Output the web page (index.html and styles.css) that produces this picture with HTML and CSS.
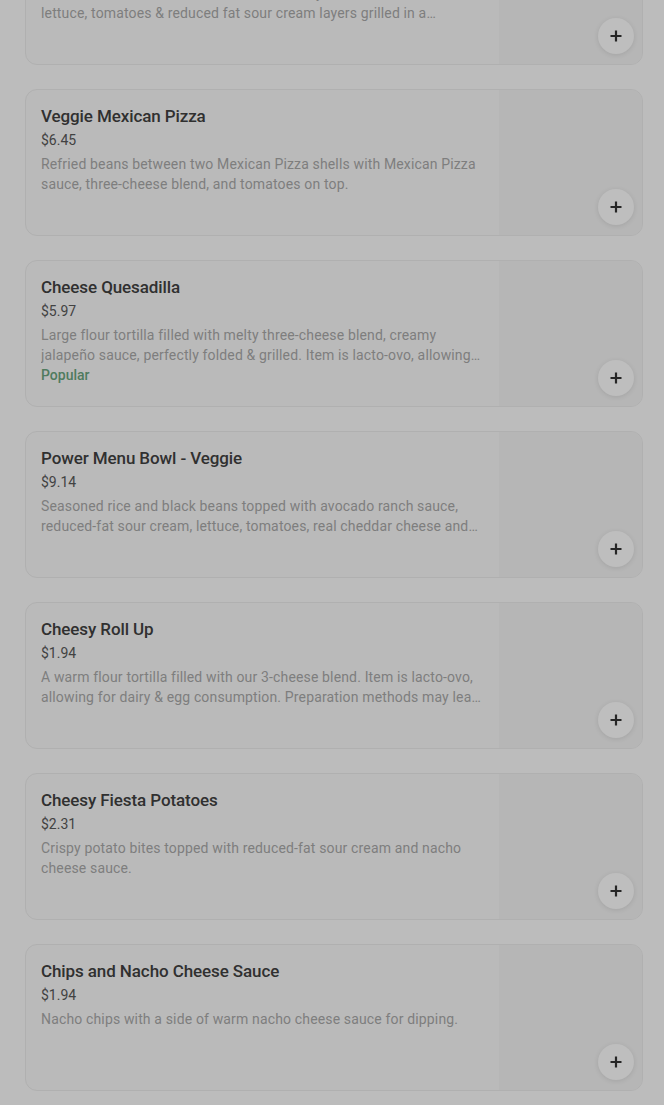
FILE: index.html
```html
<!DOCTYPE html>
<html lang="en">
<head>
    <meta charset="UTF-8">
    <title>Menu</title>
    <link rel="stylesheet" href="styles.css">
</head>
<body>
    <div class="menu-list">
        <div class="item">
            <div class="info">
                <h3>Black Bean Crunchwrap Supreme</h3>
                <div class="price">$6.12</div>
                <p class="desc">Black beans, nacho cheese sauce, a crunchy tostada shell,<br>lettuce, tomatoes &amp; reduced fat sour cream layers grilled in a<br>warm flour tortilla.</p>
            </div>
            <div class="thumb"><button class="add-btn"><svg viewBox="0 0 12 12" width="12" height="12"><path d="M6 0.5v11M0.5 6h11" stroke="currentColor" stroke-width="2.2" fill="none"/></svg></button></div>
        </div>

        <div class="item">
            <div class="info">
                <h3>Veggie Mexican Pizza</h3>
                <div class="price">$6.45</div>
                <p class="desc">Refried beans between two Mexican Pizza shells with Mexican Pizza sauce, three-cheese blend, and tomatoes on top.</p>
            </div>
            <div class="thumb"><button class="add-btn"><svg viewBox="0 0 12 12" width="12" height="12"><path d="M6 0.5v11M0.5 6h11" stroke="currentColor" stroke-width="2.2" fill="none"/></svg></button></div>
        </div>

        <div class="item">
            <div class="info">
                <h3>Cheese Quesadilla</h3>
                <div class="price">$5.97</div>
                <p class="desc">Large flour tortilla filled with melty three-cheese blend, creamy jalapeño sauce, perfectly folded &amp; grilled. Item is lacto-ovo, allowing for dairy &amp; egg consumption.</p>
                <div class="tag">Popular</div>
            </div>
            <div class="thumb"><button class="add-btn"><svg viewBox="0 0 12 12" width="12" height="12"><path d="M6 0.5v11M0.5 6h11" stroke="currentColor" stroke-width="2.2" fill="none"/></svg></button></div>
        </div>

        <div class="item">
            <div class="info">
                <h3>Power Menu Bowl - Veggie</h3>
                <div class="price">$9.14</div>
                <p class="desc">Seasoned rice and black beans topped with avocado ranch sauce, reduced-fat sour cream, lettuce, tomatoes, real cheddar cheese and guacamole.</p>
            </div>
            <div class="thumb"><button class="add-btn"><svg viewBox="0 0 12 12" width="12" height="12"><path d="M6 0.5v11M0.5 6h11" stroke="currentColor" stroke-width="2.2" fill="none"/></svg></button></div>
        </div>

        <div class="item">
            <div class="info">
                <h3>Cheesy Roll Up</h3>
                <div class="price">$1.94</div>
                <p class="desc">A warm flour tortilla filled with our 3-cheese blend. Item is lacto-ovo, allowing for dairy &amp; egg consumption. Preparation methods may lead to cross-contact.</p>
            </div>
            <div class="thumb"><button class="add-btn"><svg viewBox="0 0 12 12" width="12" height="12"><path d="M6 0.5v11M0.5 6h11" stroke="currentColor" stroke-width="2.2" fill="none"/></svg></button></div>
        </div>

        <div class="item">
            <div class="info">
                <h3>Cheesy Fiesta Potatoes</h3>
                <div class="price">$2.31</div>
                <p class="desc">Crispy potato bites topped with reduced-fat sour cream and nacho cheese sauce.</p>
            </div>
            <div class="thumb"><button class="add-btn"><svg viewBox="0 0 12 12" width="12" height="12"><path d="M6 0.5v11M0.5 6h11" stroke="currentColor" stroke-width="2.2" fill="none"/></svg></button></div>
        </div>

        <div class="item">
            <div class="info">
                <h3>Chips and Nacho Cheese Sauce</h3>
                <div class="price">$1.94</div>
                <p class="desc">Nacho chips with a side of warm nacho cheese sauce for dipping.</p>
            </div>
            <div class="thumb"><button class="add-btn"><svg viewBox="0 0 12 12" width="12" height="12"><path d="M6 0.5v11M0.5 6h11" stroke="currentColor" stroke-width="2.2" fill="none"/></svg></button></div>
        </div>
    </div>
</body>
</html>
```

FILE: styles.css
```css
:root {
    --page-bg: #bcbcbc;
    --card-bg: #bababa;
    --thumb-bg: #b6b6b6;
    --line: #b0b0b0;
    --title: #303030;
    --price: #424242;
    --muted: #7e7e7e;
    --green: #4f7b5e;
}
body {
    margin: 0;
    background: var(--page-bg);
    font-family: Roboto, "Liberation Sans", sans-serif;
    overflow: hidden;
}
.menu-list {
    display: flex;
    flex-direction: column;
    gap: 24px;
    padding: 0 21px 0 25px;
    margin-top: -82px;
}
.item {
    display: flex;
    height: 147px;
    box-sizing: border-box;
    background: var(--card-bg);
    border: 1px solid var(--line);
    border-radius: 12px;
    overflow: hidden;
}
.info {
    flex: 1;
    min-width: 0;
    padding: 15px 16px 0 15px;
}
.info h3 {
    margin: 0;
    font-size: 17px;
    font-weight: 500;
    line-height: 22px;
    letter-spacing: -0.1px;
    color: var(--title);
}
.price {
    margin-top: 3px;
    font-size: 14px;
    line-height: 20px;
    color: var(--price);
}
.desc {
    margin: 4px 0 0;
    font-size: 14px;
    line-height: 20px;
    letter-spacing: 0.15px;
    color: var(--muted);
    display: -webkit-box;
    -webkit-line-clamp: 2;
    -webkit-box-orient: vertical;
    overflow: hidden;
}
.tag {
    font-size: 14px;
    line-height: 20px;
    font-weight: 500;
    color: var(--green);
}
.thumb {
    width: 143px;
    flex-shrink: 0;
    background: var(--thumb-bg);
    display: flex;
    align-items: flex-end;
    justify-content: flex-end;
    padding: 0 8px 10px 0;
    box-sizing: border-box;
}
.add-btn {
    width: 36px;
    height: 36px;
    border: none;
    border-radius: 50%;
    background: #bebebe;
    box-shadow: 0 1px 5px rgba(0,0,0,0.1);
    color: #262626;
    display: flex;
    align-items: center;
    justify-content: center;
    padding: 0;
    cursor: pointer;
}
```
